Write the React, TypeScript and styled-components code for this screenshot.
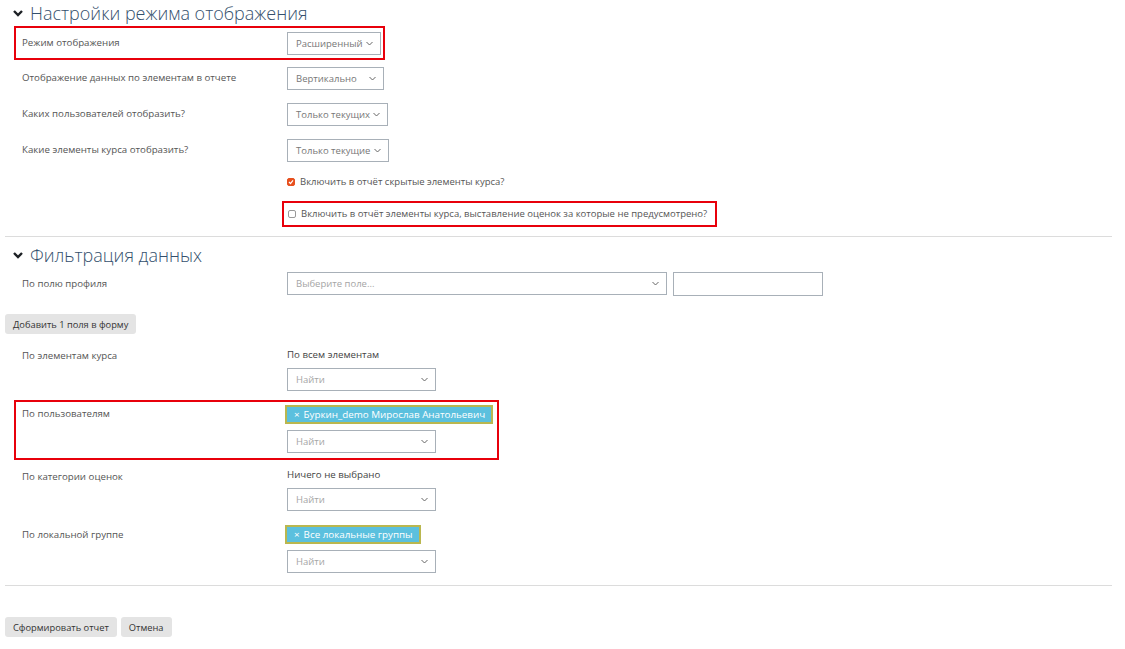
import styled, { createGlobalStyle } from "styled-components";

const GlobalStyle = createGlobalStyle`
  body {
    margin: 0;
    background: #fff;
    font-family: "Open Sans", "Liberation Sans", sans-serif;
    color: #555;
  }
`;

const Page = styled.div`
  width: 1125px;
  padding: 0 13px 0 5px;
  box-sizing: border-box;
  white-space: nowrap;
`;

const Section = styled.div<{ pb: number }>`
  border-bottom: 1px solid #dcdcdc;
  padding-bottom: ${(p) => p.pb}px;
`;

const Heading = styled.div<{ h: number }>`
  display: flex;
  align-items: center;
  height: ${(p) => p.h}px;
  padding-left: 7px;
  color: #34506d;
  font-size: 18px;
  font-weight: 300;
  gap: 6px;
`;

const Chevron = styled.svg`
  width: 12px;
  height: 12px;
`;

const Row = styled.div<{ h: number; inner?: boolean }>`
  display: grid;
  grid-template-columns: ${(p) => (p.inner ? "271px" : "282px")} 1fr;
  height: ${(p) => p.h}px;
  align-items: start;
`;

const Boxed = styled.div<{ w: number }>`
  width: ${(p) => p.w}px;
  border: 2px solid #e8000b;
  box-sizing: border-box;
  margin-left: 9px;
`;

const CheckBoxed = styled(Boxed)`
  margin-left: -5px;
  height: 26px;
  padding: 4px 0 0 4px;
`;

const Label = styled.div<{ top: number; inner?: boolean }>`
  padding-left: ${(p) => (p.inner ? 6 : 17)}px;
  padding-top: ${(p) => p.top}px;
  font-size: 9.7px;
  line-height: 14px;
  color: #555;
`;

const Control = styled.div<{ top: number }>`
  padding-top: ${(p) => p.top}px;
  display: flex;
  flex-direction: column;
  align-items: flex-start;
  gap: 6px;
`;

const Select = styled.div<{ w: number; muted?: boolean }>`
  width: ${(p) => p.w}px;
  height: 23px;
  box-sizing: border-box;
  border: 1px solid #a8b0b8;
  display: flex;
  align-items: center;
  justify-content: space-between;
  padding: 0 7px 0 8px;
  font-size: 9.5px;
  color: ${(p) => (p.muted ? "#a5a5a5" : "#777")};
  background: #fff;
`;

const Caret = styled.svg`
  width: 7px;
  height: 5px;
  flex-shrink: 0;
`;

const TextInput = styled.div`
  width: 150px;
  height: 24px;
  box-sizing: border-box;
  border: 1px solid #a8b0b8;
`;

const InlineRow = styled.div`
  display: flex;
  gap: 6px;
`;

const CheckLine = styled.div`
  display: flex;
  align-items: center;
  gap: 5px;
  font-size: 9.5px;
  line-height: 14px;
  color: #555;
`;

const Box = styled.span<{ checked?: boolean }>`
  width: 8px;
  height: 8px;
  border-radius: 2px;
  box-sizing: border-box;
  display: inline-flex;
  align-items: center;
  justify-content: center;
  background: ${(p) => (p.checked ? "#e7501e" : "#fff")};
  border: 1px solid ${(p) => (p.checked ? "#e7501e" : "#999")};
`;

const Button = styled.button`
  display: block;
  background: #e4e4e4;
  border: none;
  border-radius: 3px;
  height: 20px;
  padding: 0 8px;
  font-family: inherit;
  font-size: 9.3px;
  color: #333;
`;

const StatusText = styled.div`
  font-size: 9.7px;
  line-height: 14px;
  color: #444;
`;

const Chip = styled.div`
  background: #5bc0de;
  border: 2px solid #bab74f;
  color: #fff;
  font-size: 9.8px;
  height: 19px;
  box-sizing: border-box;
  display: flex;
  align-items: center;
  padding: 0 6px 0 7px;
  gap: 4px;
  margin-left: -2px;
`;

const ButtonBar = styled.div`
  display: flex;
  gap: 4px;
  padding-top: 31px;
`;

const ChevronIcon = () => (
  <Chevron viewBox="0 0 12 12">
    <path d="M2 4 L6 8 L10 4" fill="none" stroke="#1d2125" strokeWidth="2.4" />
  </Chevron>
);

const CaretIcon = () => (
  <Caret viewBox="0 0 7 5">
    <path d="M0.5 1 L3.5 4 L6.5 1" fill="none" stroke="#666" strokeWidth="1" />
  </Caret>
);

const Dropdown = ({ w, text, muted }: { w: number; text: string; muted?: boolean }) => (
  <Select w={w} muted={muted}>
    <span>{text}</span>
    <CaretIcon />
  </Select>
);

const App = () => {
  return (
    <Page>
      <GlobalStyle />
      <Section pb={9}>
        <Heading h={26}>
          <ChevronIcon />
          Настройки режима отображения
        </Heading>
        <Boxed w={371}>
          <Row h={30} inner>
            <Label top={8} inner>Режим отображения</Label>
            <Control top={4}>
              <Dropdown w={94} text="Расширенный" />
            </Control>
          </Row>
        </Boxed>
        <Row h={36}>
          <Label top={11}>Отображение данных по элементам в отчете</Label>
          <Control top={7}>
            <Dropdown w={97} text="Вертикально" />
          </Control>
        </Row>
        <Row h={36}>
          <Label top={11}>Каких пользователей отобразить?</Label>
          <Control top={7}>
            <Dropdown w={101} text="Только текущих" />
          </Control>
        </Row>
        <Row h={36}>
          <Label top={11}>Какие элементы курса отобразить?</Label>
          <Control top={7}>
            <Dropdown w={102} text="Только текущие" />
          </Control>
        </Row>
        <Row h={33}>
          <span />
          <Control top={7}>
            <CheckLine>
              <Box checked>
                <svg width="6" height="6" viewBox="0 0 6 6">
                  <path d="M1 3 L2.5 4.5 L5 1.3" fill="none" stroke="#fff" strokeWidth="1.2" />
                </svg>
              </Box>
              Включить в отчёт скрытые элементы курса?
            </CheckLine>
          </Control>
        </Row>
        <Row h={26}>
          <span />
          <Control top={0}>
            <CheckBoxed w={435}>
              <CheckLine>
                <Box />
                Включить в отчёт элементы курса, выставление оценок за которые не предусмотрено?
              </CheckLine>
            </CheckBoxed>
          </Control>
        </Row>
      </Section>

      <Section pb={8}>
        <Heading h={35}>
          <ChevronIcon />
          Фильтрация данных
        </Heading>
        <Row h={42}>
          <Label top={5}>По полю профиля</Label>
          <Control top={0}>
            <InlineRow>
              <Dropdown w={380} text="Выберите поле..." muted />
              <TextInput />
            </InlineRow>
          </Control>
        </Row>
        <Button>Добавить 1 поля в форму</Button>
        <Row h={66}>
          <Label top={15}>По элементам курса</Label>
          <Control top={14}>
            <StatusText>По всем элементам</StatusText>
            <Dropdown w={149} text="Найти" muted />
          </Control>
        </Row>
        <Boxed w={485}>
          <Row h={56} inner>
            <Label top={5} inner>По пользователям</Label>
            <Control top={3}>
              <Chip>
                <span>×</span>Буркин_demo Мирослав Анатольевич
              </Chip>
              <Dropdown w={149} text="Найти" muted />
            </Control>
          </Row>
        </Boxed>
        <Row h={60}>
          <Label top={10}>По категории оценок</Label>
          <Control top={8}>
            <StatusText>Ничего не выбрано</StatusText>
            <Dropdown w={149} text="Найти" muted />
          </Control>
        </Row>
        <Row h={57}>
          <Label top={8}>По локальной группе</Label>
          <Control top={5}>
            <Chip>
              <span>×</span>Все локальные группы
            </Chip>
            <Dropdown w={149} text="Найти" muted />
          </Control>
        </Row>
      </Section>

      <ButtonBar>
        <Button>Сформировать отчет</Button>
        <Button>Отмена</Button>
      </ButtonBar>
    </Page>
  );
};

export default App;
